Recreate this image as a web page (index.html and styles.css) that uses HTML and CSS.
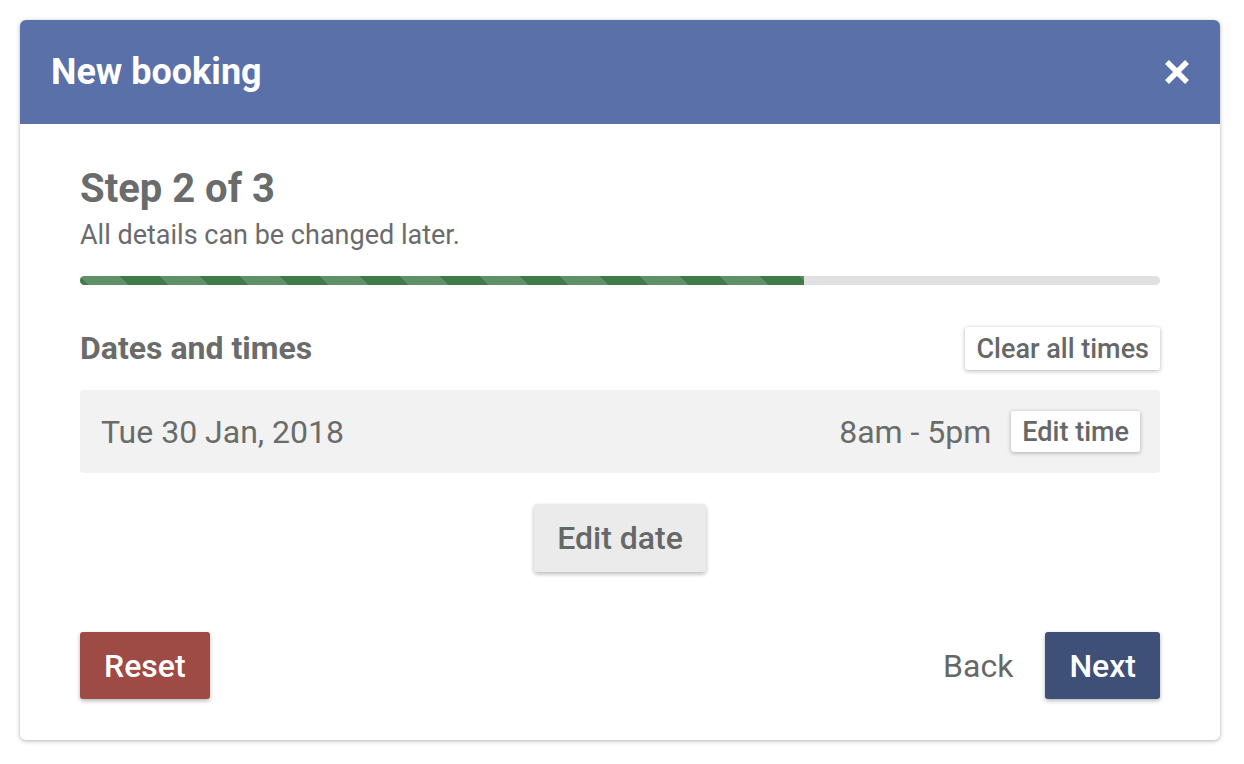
FILE: index.html
```html
<!DOCTYPE html>
<html>
<head>
<meta charset="utf-8">
<link rel="stylesheet" href="styles.css">
</head>
<body>
<div class="modal">
  <div class="modal-header">
    <h1 class="modal-title">New booking</h1>
    <button class="close-btn" aria-label="Close">
      <svg width="26" height="26" viewBox="0 0 26 26"><path d="M3 3 L23 23 M23 3 L3 23" stroke="#fff" stroke-width="5.5" fill="none"/></svg>
    </button>
  </div>
  <div class="modal-body">
    <h2 class="step-title">Step 2 of 3</h2>
    <p class="step-sub">All details can be changed later.</p>
    <div class="progress"><div class="progress-bar" style="width:67%"></div></div>

    <div class="section-head">
      <h3 class="section-title">Dates and times</h3>
      <button class="btn-small btn-clear">Clear all times</button>
    </div>
    <div class="date-row">
      <span class="date-text">Tue 30 Jan, 2018</span>
      <div class="time-group">
        <span class="time-text">8am - 5pm</span>
        <button class="btn-small btn-time">Edit time</button>
      </div>
    </div>
    <div class="center-row">
      <button class="btn-edit-date">Edit date</button>
    </div>

    <div class="footer">
      <button class="btn btn-reset">Reset</button>
      <div class="footer-right">
        <button class="btn btn-back">Back</button>
        <button class="btn btn-next">Next</button>
      </div>
    </div>
  </div>
</div>
</body>
</html>
```
FILE: styles.css
```css
* { box-sizing: border-box; }
html, body { margin: 0; padding: 0; background: #fff; }
body {
  font-family: Roboto, "Liberation Sans", sans-serif;
  color: #6a6c6c;
  padding: 20px;
}
button { font-family: inherit; cursor: pointer; }
.modal {
  width: 1200px;
  height: 720px;
  background: #fff;
  border-radius: 6px;
  box-shadow: 0 1px 4px rgba(0,0,0,0.3);
  overflow: hidden;
}
.modal-header {
  height: 104px;
  background: #5a70a8;
  display: flex;
  align-items: center;
  justify-content: space-between;
  padding: 0 30px 0 31px;
}
.modal-title {
  margin: 0;
  color: #fff;
  font-size: 36px;
  font-weight: 700;
  line-height: 44px;
}
.close-btn {
  background: none;
  border: 0;
  padding: 0;
  width: 26px;
  height: 26px;
  display: flex;
}
.modal-body {
  padding: 43px 60px 0 60px;
}
.step-title {
  margin: 0;
  font-size: 40px;
  font-weight: 700;
  line-height: 44px;
}
.step-sub {
  margin: 8px 0 0;
  font-size: 27px;
  line-height: 32px;
}
.progress {
  margin-top: 25px;
  height: 9px;
  background: #e0e0e0;
  border-radius: 5px;
  overflow: hidden;
}
.progress-bar {
  height: 100%;
  background-color: #3f7a48;
  background-image: linear-gradient(45deg, rgba(255,255,255,0.17) 25%, transparent 25%, transparent 50%, rgba(255,255,255,0.17) 50%, rgba(255,255,255,0.17) 75%, transparent 75%, transparent);
  background-size: 80px 80px;
}
.section-head {
  margin-top: 42px;
  display: flex;
  align-items: center;
  justify-content: space-between;
}
.section-title {
  margin: 0;
  font-size: 32px;
  font-weight: 700;
  line-height: 43px;
}
.btn-small {
  background: #fff;
  border: 0;
  border-radius: 3px;
  box-shadow: 0 1px 4px rgba(0,0,0,0.3);
  color: #666868;
  font-size: 27px;
  font-weight: 500;
  padding: 0 11px;
}
.btn-clear { height: 43px; }
.btn-time { height: 41px; }
.date-row {
  margin-top: 20px;
  height: 83px;
  background: #f2f2f2;
  border-radius: 3px;
  display: flex;
  align-items: center;
  justify-content: space-between;
  padding: 0 20px 0 21px;
}
.date-text, .time-text {
  font-size: 32px;
}
.time-group {
  display: flex;
  align-items: center;
  gap: 20px;
}
.center-row {
  display: flex;
  justify-content: center;
  margin-top: 31px;
}
.btn-edit-date {
  background: #ebebeb;
  border: 0;
  border-radius: 3px;
  box-shadow: 0 2px 4px rgba(0,0,0,0.28);
  color: #666868;
  font-size: 32px;
  font-weight: 500;
  height: 68px;
  padding: 0 23px;
}
.footer {
  margin-top: 60px;
  display: flex;
  justify-content: space-between;
  align-items: center;
}
.footer-right {
  display: flex;
  align-items: center;
  gap: 12px;
}
.btn {
  border: 0;
  border-radius: 3px;
  font-size: 32px;
  font-weight: 500;
  height: 67px;
  padding: 0 24px;
}
.btn-reset {
  background: #9e4a45;
  color: #fff;
  box-shadow: 0 2px 4px rgba(0,0,0,0.28);
}
.btn-next {
  background: #3e4f78;
  color: #fff;
  box-shadow: 0 2px 4px rgba(0,0,0,0.28);
}
.btn-back {
  background: none;
  color: #666868;
  padding: 0 20px;
  font-weight: 400;
}
```
